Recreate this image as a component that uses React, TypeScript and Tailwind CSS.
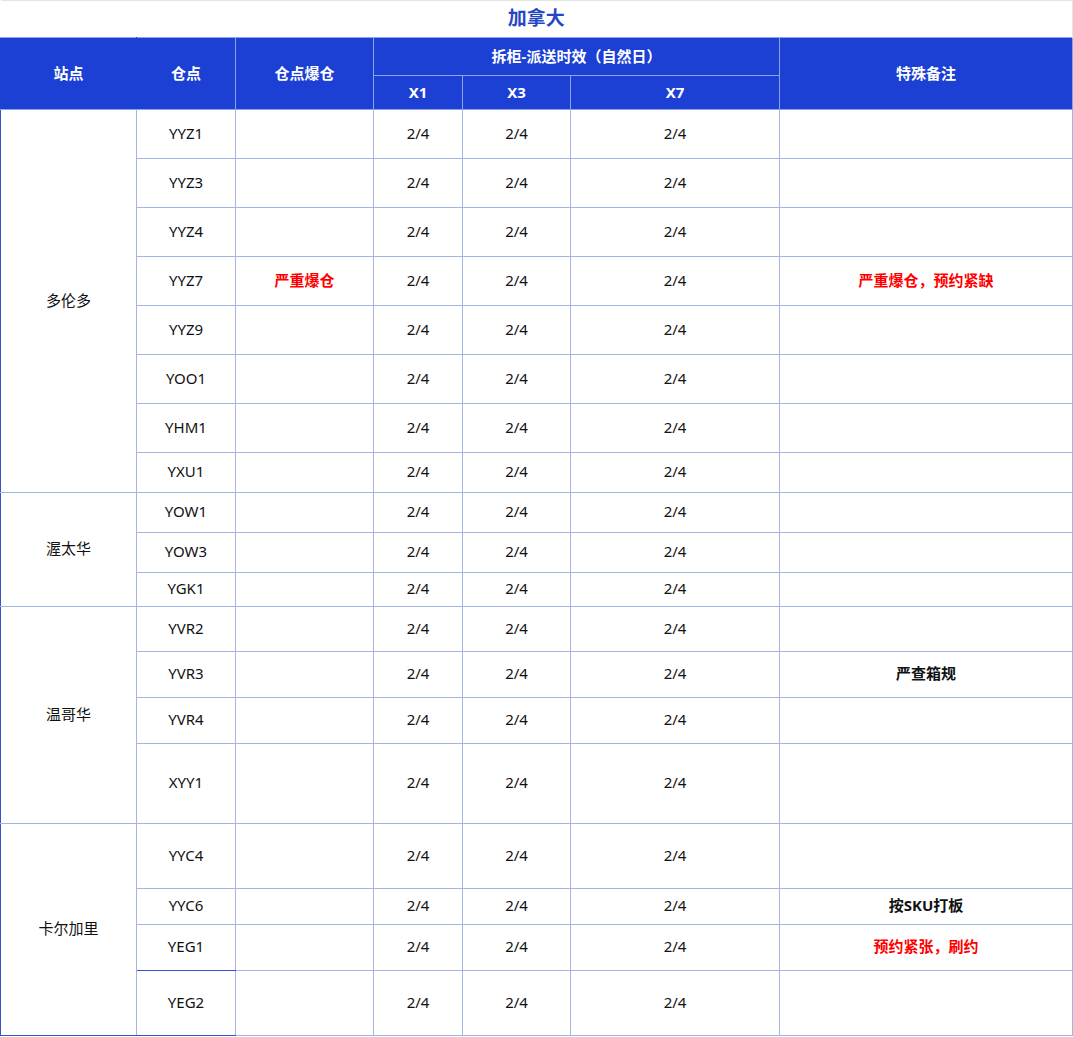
import React from "react";

type Row = {
  code: string;
  h: number;
  burst?: string;
  note?: string;
  noteRed?: boolean;
};

type Group = { station: string; rows: Row[] };

const groups: Group[] = [
  {
    station: "多伦多",
    rows: [
      { code: "YYZ1", h: 49 },
      { code: "YYZ3", h: 49 },
      { code: "YYZ4", h: 49 },
      { code: "YYZ7", h: 49, burst: "严重爆仓", note: "严重爆仓，预约紧缺", noteRed: true },
      { code: "YYZ9", h: 49 },
      { code: "YOO1", h: 49 },
      { code: "YHM1", h: 49 },
      { code: "YXU1", h: 40 },
    ],
  },
  {
    station: "渥太华",
    rows: [
      { code: "YOW1", h: 40 },
      { code: "YOW3", h: 40 },
      { code: "YGK1", h: 34 },
    ],
  },
  {
    station: "温哥华",
    rows: [
      { code: "YVR2", h: 45 },
      { code: "YVR3", h: 46, note: "严查箱规" },
      { code: "YVR4", h: 46 },
      { code: "XYY1", h: 80 },
    ],
  },
  {
    station: "卡尔加里",
    rows: [
      { code: "YYC4", h: 65 },
      { code: "YYC6", h: 36, note: "按SKU打板" },
      { code: "YEG1", h: 46, note: "预约紧张，刷约", noteRed: true },
      { code: "YEG2", h: 65 },
    ],
  },
];

const cell = "border border-[#a5b5e3] text-center align-middle px-0 pt-0 pb-[2px]";
const head = "border border-[#8ea2ec] text-center align-middle font-bold text-white px-0 pt-0 pb-[1px]";

export default function App() {
  return (
    <div
      className="w-[1073px] bg-white text-[15px] text-[#111]"
      style={{ fontFamily: '"Noto Sans", "Noto Sans CJK SC", sans-serif' }}
    >
      <table className="w-[1072px] table-fixed border-collapse">
        <colgroup>
          <col className="w-[136px]" />
          <col className="w-[99px]" />
          <col className="w-[138px]" />
          <col className="w-[89px]" />
          <col className="w-[108px]" />
          <col className="w-[209px]" />
          <col className="w-[293px]" />
        </colgroup>
        <thead>
          <tr className="h-[37px]">
            <td
              colSpan={7}
              className="border-t border-r border-[#e4e4e4] pb-[1px] text-center align-middle text-[19px] font-bold text-[#2546c4]"
            >
              加拿大
            </td>
          </tr>
          <tr className="h-[38px] bg-[#1c40d4]">
            <th rowSpan={2} className={`${head} border-r-[#1c40d4] border-l-[#1c40d4]`}>
              站点
            </th>
            <th rowSpan={2} className={head}>
              仓点
            </th>
            <th rowSpan={2} className={head}>
              仓点爆仓
            </th>
            <th colSpan={3} className={head}>
              拆柜-派送时效（自然日）
            </th>
            <th rowSpan={2} className={head}>
              特殊备注
            </th>
          </tr>
          <tr className="h-[34px] bg-[#1c40d4]">
            <th className={head}>X1</th>
            <th className={head}>X3</th>
            <th className={head}>X7</th>
          </tr>
        </thead>
        <tbody>
          {groups.map((g, gi) =>
            g.rows.map((r, ri) => {
              const lastRow = gi === groups.length - 1 && ri === g.rows.length - 1;
              const darkCodeBottom = r.code === "YEG1" || lastRow;
              return (
                <tr key={r.code} style={{ height: r.h }}>
                  {ri === 0 && (
                    <td
                      rowSpan={g.rows.length}
                      className={`${cell} border-l-[#3553c6] ${gi === groups.length - 1 ? "border-b-[#3553c6]" : ""}`}
                    >
                      {g.station}
                    </td>
                  )}
                  <td className={`${cell} ${darkCodeBottom ? "border-b-[#3553c6]" : ""}`}>{r.code}</td>
                  <td className={`${cell} font-bold text-[#f00]`}>{r.burst ?? ""}</td>
                  <td className={cell}>2/4</td>
                  <td className={cell}>2/4</td>
                  <td className={cell}>2/4</td>
                  <td className={`${cell} font-bold ${r.noteRed ? "text-[#f00]" : "text-[#111]"}`}>
                    {r.note ?? ""}
                  </td>
                </tr>
              );
            })
          )}
        </tbody>
      </table>
    </div>
  );
}
